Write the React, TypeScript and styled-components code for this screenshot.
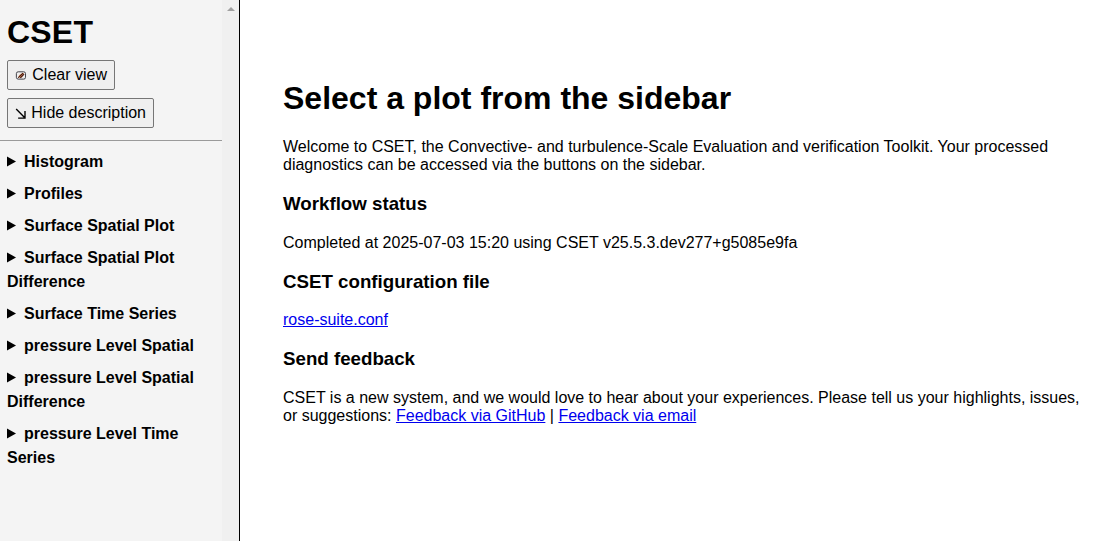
import React from "react";
import styled, { createGlobalStyle } from "styled-components";

const Global = createGlobalStyle`
  html, body { margin: 0; padding: 0; background: #fff; overflow: hidden; }
  body { font-family: "Liberation Sans", Arial, sans-serif; font-size: 16px; color: #000; line-height: 18px; }
`;
const Page = styled.div`display: flex; height: 541px;`;
const Sidebar = styled.nav`
  box-sizing: border-box; width: 240px; flex: none; display: flex;
  background: #f4f4f4; border-right: 1px solid #000;
`;
const Panel = styled.div`width: 222px; flex: none;`;
const ScrollTrack = styled.div`
  width: 17px; background: #f0f0f0; display: flex; justify-content: center;
  padding-top: 7px; box-sizing: border-box;
`;
const Brand = styled.h1`margin: 13px 7px 9px; font-size: 32px; line-height: 38px; letter-spacing: 0.2px;`;
const Button = styled.button`
  box-sizing: border-box; display: flex; align-items: center; gap: 4.5px;
  width: ${(p: { $w: number }) => p.$w}px; height: 30px; margin: 0 0 8px 7px; padding: 0 7px;
  border: 1px solid #767676; border-radius: 2px; background: #efefef;
  font: 16px "Liberation Sans", Arial, sans-serif; color: #000; white-space: nowrap;
`;
const Rule = styled.hr`margin: 12px 0 9px; border: 0; border-top: 1px solid #9a9a9a;`;
const Group = styled.div`margin: 0 7px 8px; font-weight: 700; line-height: 24px;`;
const Marker = styled.svg`width: 9px; height: 11px; margin-right: 8px;`;
const Main = styled.main`padding: 80px 26px 0 43px; flex: 1;`;
const Title = styled.h1`margin: 0 0 21.4px; font-size: 32px; line-height: 37px;`;
const Heading = styled.h3`margin: 0 0 18.72px; font-size: 18.72px; line-height: 22px;`;
const Text = styled.p`margin: 0 0 18.72px; line-height: 18px;`;
const Link = styled.a`color: #0000ee; text-decoration: underline;`;

const groups = [
  "Histogram", "Profiles", "Surface Spatial Plot", "Surface Spatial Plot Difference",
  "Surface Time Series", "pressure Level Spatial", "pressure Level Spatial Difference",
  "pressure Level Time Series",
];

export default function App() {
  return (
    <Page>
      <Global />
      <Sidebar>
        <Panel>
          <Brand>CSET</Brand>
          <Button $w={108}>
            <svg width="14" height="12" viewBox="0 0 14 12" fill="none">
              <rect x="1.5" y="2.5" width="10" height="8" rx="2" stroke="#33333b" />
              <path d="M3.4 9 L4.8 6 L8.6 3.6 L10 4.6 L7.6 8.6 Z" fill="#d98a50" />
              <path d="M3.4 9 L8.8 3.9 M5.8 9.2 L10 5" stroke="#3a1010" strokeWidth="1.1" />
            </svg>
            Clear view
          </Button>
          <Button $w={147}>
            <svg width="12" height="14" viewBox="0 0 12 14" fill="none" stroke="#000" strokeWidth="1.4">
              <path d="M1.2 3 L9.5 11.4 M10.2 5 V12.2 H3.2" />
            </svg>
            Hide description
          </Button>
          <Rule />
          {groups.map((g) => (
            <Group key={g}>
              <Marker viewBox="0 0 9 11"><path d="M0 0.4 L9 5.4 L0 10.4 Z" /></Marker>
              {g}
            </Group>
          ))}
        </Panel>
        <ScrollTrack>
          <svg width="8" height="4" viewBox="0 0 8 4"><path d="M0 4 L4 0 L8 4Z" fill="#a0a0a0" /></svg>
        </ScrollTrack>
      </Sidebar>
      <Main>
        <Title>Select a plot from the sidebar</Title>
        <Text>
          Welcome to CSET, the Convective- and turbulence-Scale Evaluation and verification Toolkit. Your processed
          diagnostics can be accessed via the buttons on the sidebar.
        </Text>
        <Heading>Workflow status</Heading>
        <Text>Completed at 2025-07-03 15:20 using CSET v25.5.3.dev277+g5085e9fa</Text>
        <Heading>CSET configuration file</Heading>
        <Text><Link href="#">rose-suite.conf</Link></Text>
        <Heading>Send feedback</Heading>
        <Text>
          CSET is a new system, and we would love to hear about your experiences. Please tell us your highlights,
          issues, or suggestions: <Link href="#">Feedback via GitHub</Link> | <Link href="#">Feedback via email</Link>
        </Text>
      </Main>
    </Page>
  );
}
